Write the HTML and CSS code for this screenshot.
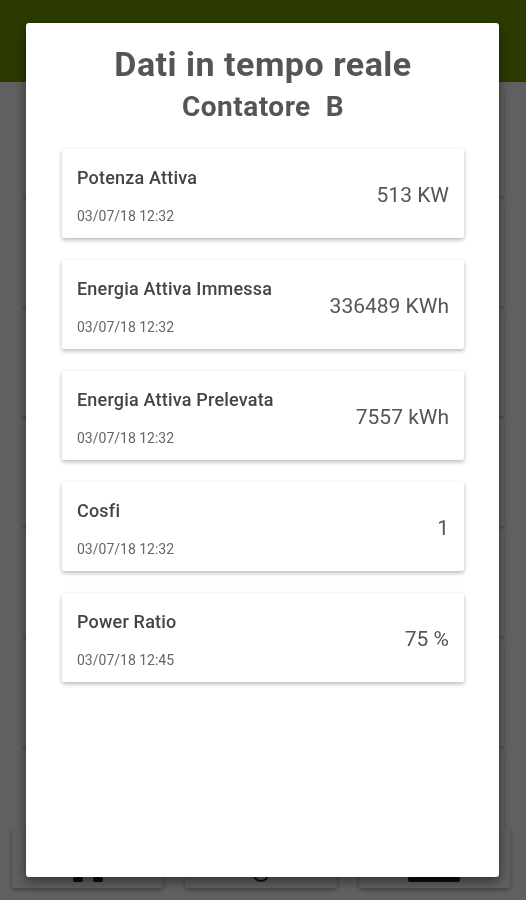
FILE: index.html
```html
<!DOCTYPE html>
<html lang="it">
<head>
  <meta charset="UTF-8">
  <meta name="viewport" content="width=device-width, initial-scale=1.0">
  <title>Dati in tempo reale</title>
  <link rel="stylesheet" href="styles.css">
</head>
<body>
  <div class="app">
    <div class="topbar"></div>
    <div class="lista">
      <div class="riga"></div>
      <div class="riga"></div>
      <div class="riga"></div>
      <div class="riga"></div>
      <div class="riga"></div>
      <div class="riga"></div>
      <div class="riga"></div>
    </div>
    <div class="tiles">
      <div class="tile">
        <span class="tile-ico"></span>
        <span class="tile-ico"></span>
      </div>
      <div class="tile"><span class="tile-ico tondo"></span></div>
      <div class="tile"><span class="tile-ico larga"></span></div>
    </div>
  </div>

  <div class="overlay"></div>

  <div class="modal">
    <h1 class="titolo">Dati in tempo reale</h1>
    <h2 class="sottotitolo">Contatore&nbsp; B</h2>

    <div class="card">
      <div class="info">
        <div class="nome">Potenza Attiva</div>
        <div class="data">03/07/18 12:32</div>
      </div>
      <div class="valore">513 KW</div>
    </div>

    <div class="card">
      <div class="info">
        <div class="nome">Energia Attiva Immessa</div>
        <div class="data">03/07/18 12:32</div>
      </div>
      <div class="valore">336489 KWh</div>
    </div>

    <div class="card">
      <div class="info">
        <div class="nome">Energia Attiva Prelevata</div>
        <div class="data">03/07/18 12:32</div>
      </div>
      <div class="valore">7557 kWh</div>
    </div>

    <div class="card">
      <div class="info">
        <div class="nome">Cosfi</div>
        <div class="data">03/07/18 12:32</div>
      </div>
      <div class="valore">1</div>
    </div>

    <div class="card">
      <div class="info">
        <div class="nome">Power Ratio</div>
        <div class="data">03/07/18 12:45</div>
      </div>
      <div class="valore">75 %</div>
    </div>
  </div>
</body>
</html>
```

FILE: styles.css
```css
body {
  font-family: Roboto, "Liberation Sans", Arial, sans-serif;
  margin: 0;
  background-color: #f0f0f0;
  height: 900px;
  overflow: hidden;
}
.app {
  height: 900px;
  display: flex;
  flex-direction: column;
}
.topbar {
  height: 82px;
  background-color: #6e9200;
}
.lista {
  flex: 1;
  overflow: hidden;
  padding: 8px 22px 0 22px;
}
.riga {
  height: 106px;
  margin-bottom: 4px;
  background-color: #f2f2f2;
  box-shadow: 0 2px 3px rgba(0, 0, 0, 0.2);
}
.tiles {
  display: flex;
  gap: 22px;
  padding: 0 16px 12px 12px;
}
.tile {
  flex: 1;
  height: 60px;
  background-color: #ececec;
  border-radius: 3px;
  box-shadow: 0 2px 4px rgba(0, 0, 0, 0.35);
  display: flex;
  justify-content: center;
  align-items: flex-end;
  gap: 10px;
  padding-bottom: 6px;
  box-sizing: border-box;
}
.tile-ico {
  width: 10px;
  height: 5px;
  background-color: #222;
  border-radius: 2px;
}
.tile-ico.tondo {
  width: 12px;
  height: 8px;
  background-color: transparent;
  border: 2px solid #333;
  border-top: none;
  border-radius: 0 0 8px 8px;
}
.tile-ico.larga {
  width: 52px;
  height: 6px;
}
.overlay {
  position: fixed;
  inset: 0;
  background-color: rgba(0, 0, 0, 0.6);
}
.modal {
  position: fixed;
  top: 23px;
  left: 26px;
  width: 473px;
  height: 854px;
  box-sizing: border-box;
  padding: 22px 35px 0 36px;
  background-color: #fff;
  border-radius: 3px;
  box-shadow: 0 4px 12px rgba(0, 0, 0, 0.5);
}
.titolo {
  margin: 0;
  text-align: center;
  font-size: 34px;
  line-height: 38px;
  letter-spacing: 0.5px;
  font-weight: 700;
  color: #555;
}
.sottotitolo {
  margin: 9px 0 27px;
  text-align: center;
  font-size: 28px;
  line-height: 30px;
  letter-spacing: 0.5px;
  font-weight: 700;
  color: #555;
}
.card {
  display: flex;
  align-items: center;
  justify-content: space-between;
  height: 89px;
  box-sizing: border-box;
  padding: 19px 15px 14px 15px;
  margin-bottom: 22px;
  background-color: #fff;
  border-radius: 2px;
  box-shadow: 0 2px 4px rgba(0, 0, 0, 0.28);
}
.nome {
  font-size: 18px;
  line-height: 20px;
  letter-spacing: 0.2px;
  font-weight: 500;
  color: #444;
}
.data {
  margin-top: 20px;
  font-size: 14px;
  line-height: 16px;
  color: #666;
}
.valore {
  font-size: 21px;
  color: #555;
  padding-bottom: 2px;
}
```
